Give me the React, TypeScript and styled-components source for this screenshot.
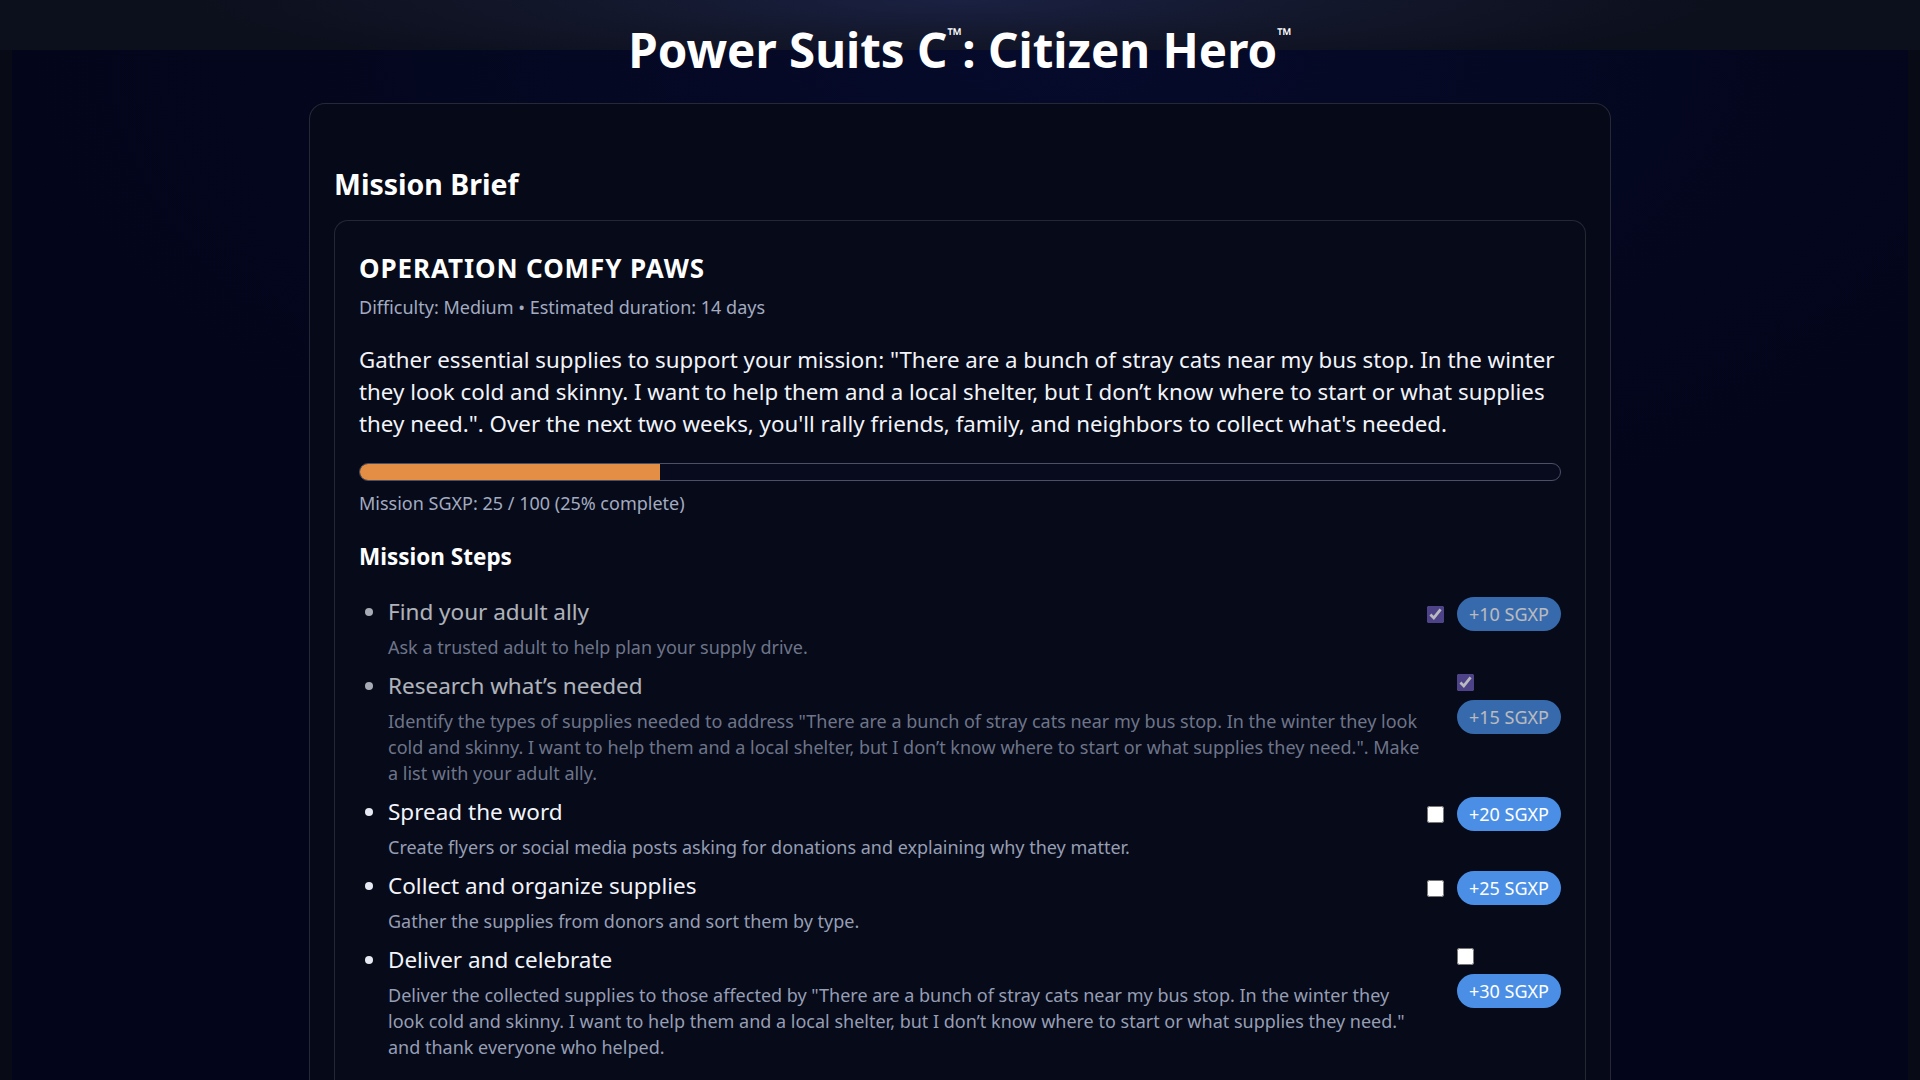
import React, { useState } from 'react';
import styled, { createGlobalStyle } from 'styled-components';

interface MissionStep {
  id: number;
  title: string;
  description: string;
  xp: number;
  done: boolean;
}

const QUOTE =
  'There are a bunch of stray cats near my bus stop. In the winter they look cold and skinny. I want to help them and a local shelter, but I don\u2019t know where to start or what supplies they need.';

const initialSteps: MissionStep[] = [
  {
    id: 1,
    title: 'Find your adult ally',
    description: 'Ask a trusted adult to help plan your supply drive.',
    xp: 10,
    done: true,
  },
  {
    id: 2,
    title: 'Research what\u2019s needed',
    description: `Identify the types of supplies needed to address "${QUOTE}". Make a list with your adult ally.`,
    xp: 15,
    done: true,
  },
  {
    id: 3,
    title: 'Spread the word',
    description: 'Create flyers or social media posts asking for donations and explaining why they matter.',
    xp: 20,
    done: false,
  },
  {
    id: 4,
    title: 'Collect and organize supplies',
    description: 'Gather the supplies from donors and sort them by type.',
    xp: 25,
    done: false,
  },
  {
    id: 5,
    title: 'Deliver and celebrate',
    description: `Deliver the collected supplies to those affected by "${QUOTE}" and thank everyone who helped.`,
    xp: 30,
    done: false,
  },
];

const App: React.FC = () => {
  const [steps, setSteps] = useState(initialSteps);

  const total = steps.reduce((sum, s) => sum + s.xp, 0);
  const earned = steps.filter(s => s.done).reduce((sum, s) => sum + s.xp, 0);
  const percent = Math.round((earned / total) * 100);

  const toggle = (id: number) =>
    setSteps(prev => prev.map(s => (s.id === id ? { ...s, done: !s.done } : s)));

  return (
    <Page>
      <GlobalStyle />
      <Header>
        <Title>
          Power Suits C<Tm>™</Tm>: Citizen Hero<Tm>™</Tm>
        </Title>
      </Header>
      <Main>
        <Panel>
          <SectionTitle>Mission Brief</SectionTitle>
          <Brief>
            <OpName>OPERATION COMFY PAWS</OpName>
            <Meta>Difficulty: Medium • Estimated duration: 14 days</Meta>
            <Lead>
              Gather essential supplies to support your mission: "{QUOTE}". Over the next two weeks, you'll rally
              friends, family, and neighbors to collect what's needed.
            </Lead>
            <Track>
              <Fill style={{ width: `${percent}%` }} />
            </Track>
            <Meta>
              Mission SGXP: {earned} / {total} ({percent}% complete)
            </Meta>
            <StepsTitle>Mission Steps</StepsTitle>
            <StepList>
              {steps.map(step => (
                <Step key={step.id} done={step.done}>
                  <StepRow>
                    <StepText>
                      <StepName>{step.title}</StepName>
                      <StepDesc>{step.description}</StepDesc>
                    </StepText>
                    <Controls>
                      <Check type="checkbox" checked={step.done} onChange={() => toggle(step.id)} />
                      <Badge>+{step.xp} SGXP</Badge>
                    </Controls>
                  </StepRow>
                </Step>
              ))}
            </StepList>
          </Brief>
        </Panel>
      </Main>
    </Page>
  );
};

const GlobalStyle = createGlobalStyle`
  html, body {
    margin: 0;
    padding: 0;
    background: #080b16;
  }
  body {
    font-family: 'Noto Sans', 'Open Sans', sans-serif;
    color: #eef1f7;
  }
`;

const Page = styled.div`
  min-height: 100vh;
  background: #080b16;
`;

const Header = styled.header`
  height: 50px;
  background: radial-gradient(ellipse 40% 160% at 50% 0%, #1a2142 0%, #121629 55%, #0c0f1c 100%);
  text-align: center;
`;

const Title = styled.h1`
  margin: 0;
  padding-top: 24px;
  font-size: 47.5px;
  line-height: 52px;
  font-weight: 700;
  color: #ffffff;
`;

const Tm = styled.sup`
  font-size: 0.4em;
  vertical-align: 1.35em;
  line-height: 0;
`;

const Main = styled.main`
  margin: 0 12px;
  padding: 53px 0 40px;
  background: radial-gradient(ellipse 70% 60% at 55% 0%, #060b2c 0%, #03061c 60%, #03051a 100%);
`;

const Panel = styled.section`
  box-sizing: border-box;
  width: 1302px;
  margin: 0 auto;
  padding: 62px 24px 24px;
  border: 1px solid rgba(255, 255, 255, 0.13);
  border-radius: 16px;
  background: #060918;
`;

const SectionTitle = styled.h2`
  margin: 0 0 18px;
  font-size: 28.5px;
  line-height: 36px;
  font-weight: 700;
  color: #ffffff;
`;

const Brief = styled.div`
  border: 1px solid rgba(255, 255, 255, 0.12);
  border-radius: 14px;
  padding: 31px 24px 24px;
  background: #060a19;
`;

const OpName = styled.h3`
  margin: 0 0 11px;
  font-size: 26px;
  line-height: 32px;
  font-weight: 700;
  letter-spacing: 0.9px;
  color: #ffffff;
`;

const Meta = styled.p`
  margin: 0;
  font-size: 18px;
  line-height: 24px;
  color: #a3abc0;
`;

const Lead = styled.p`
  margin: 25px 0 23px;
  font-size: 22.3px;
  line-height: 32px;
  color: #f2f4f9;
`;

const Track = styled.div`
  height: 16px;
  border: 1px solid #4a5068;
  border-radius: 999px;
  background: #070b1d;
  overflow: hidden;
  margin-bottom: 10px;
`;

const Fill = styled.div`
  height: 100%;
  background: #e48e45;
`;

const StepsTitle = styled.h4`
  margin: 28px 0 25px;
  font-size: 22.5px;
  line-height: 28px;
  font-weight: 700;
  color: #ffffff;
`;

const StepList = styled.ul`
  margin: 0;
  padding: 0 0 0 29px;
  list-style: disc;
`;

const Step = styled.li<{ done: boolean }>`
  font-size: 22px;
  color: #eef1f7;
  margin-bottom: 10px;
  opacity: ${({ done }) => (done ? 0.72 : 1)};

  &::marker {
    color: #e6e9f1;
  }
`;

const StepRow = styled.div`
  display: flex;
  align-items: flex-start;
  justify-content: space-between;
  gap: 29px;
`;

const StepText = styled.div`
  flex: 0 1 auto;
`;

const StepName = styled.div`
  font-size: 22.5px;
  line-height: 30px;
  color: #f2f4f9;
`;

const StepDesc = styled.div`
  margin-top: 7px;
  font-size: 18px;
  line-height: 26px;
  color: #969eb4;
`;

const Controls = styled.div`
  flex: 0 1 auto;
  display: flex;
  flex-wrap: wrap;
  align-items: center;
  gap: 6px 10px;
`;

const Check = styled.input`
  width: 17px;
  height: 17px;
  margin: 3px 3px 3px 0;
  accent-color: #6b58b4;
`;

const Badge = styled.span`
  display: inline-block;
  padding: 0 12px;
  height: 34px;
  line-height: 34px;
  border-radius: 999px;
  background: #4a8fe5;
  color: #ffffff;
  font-size: 18px;
  white-space: nowrap;
`;

export default App;
